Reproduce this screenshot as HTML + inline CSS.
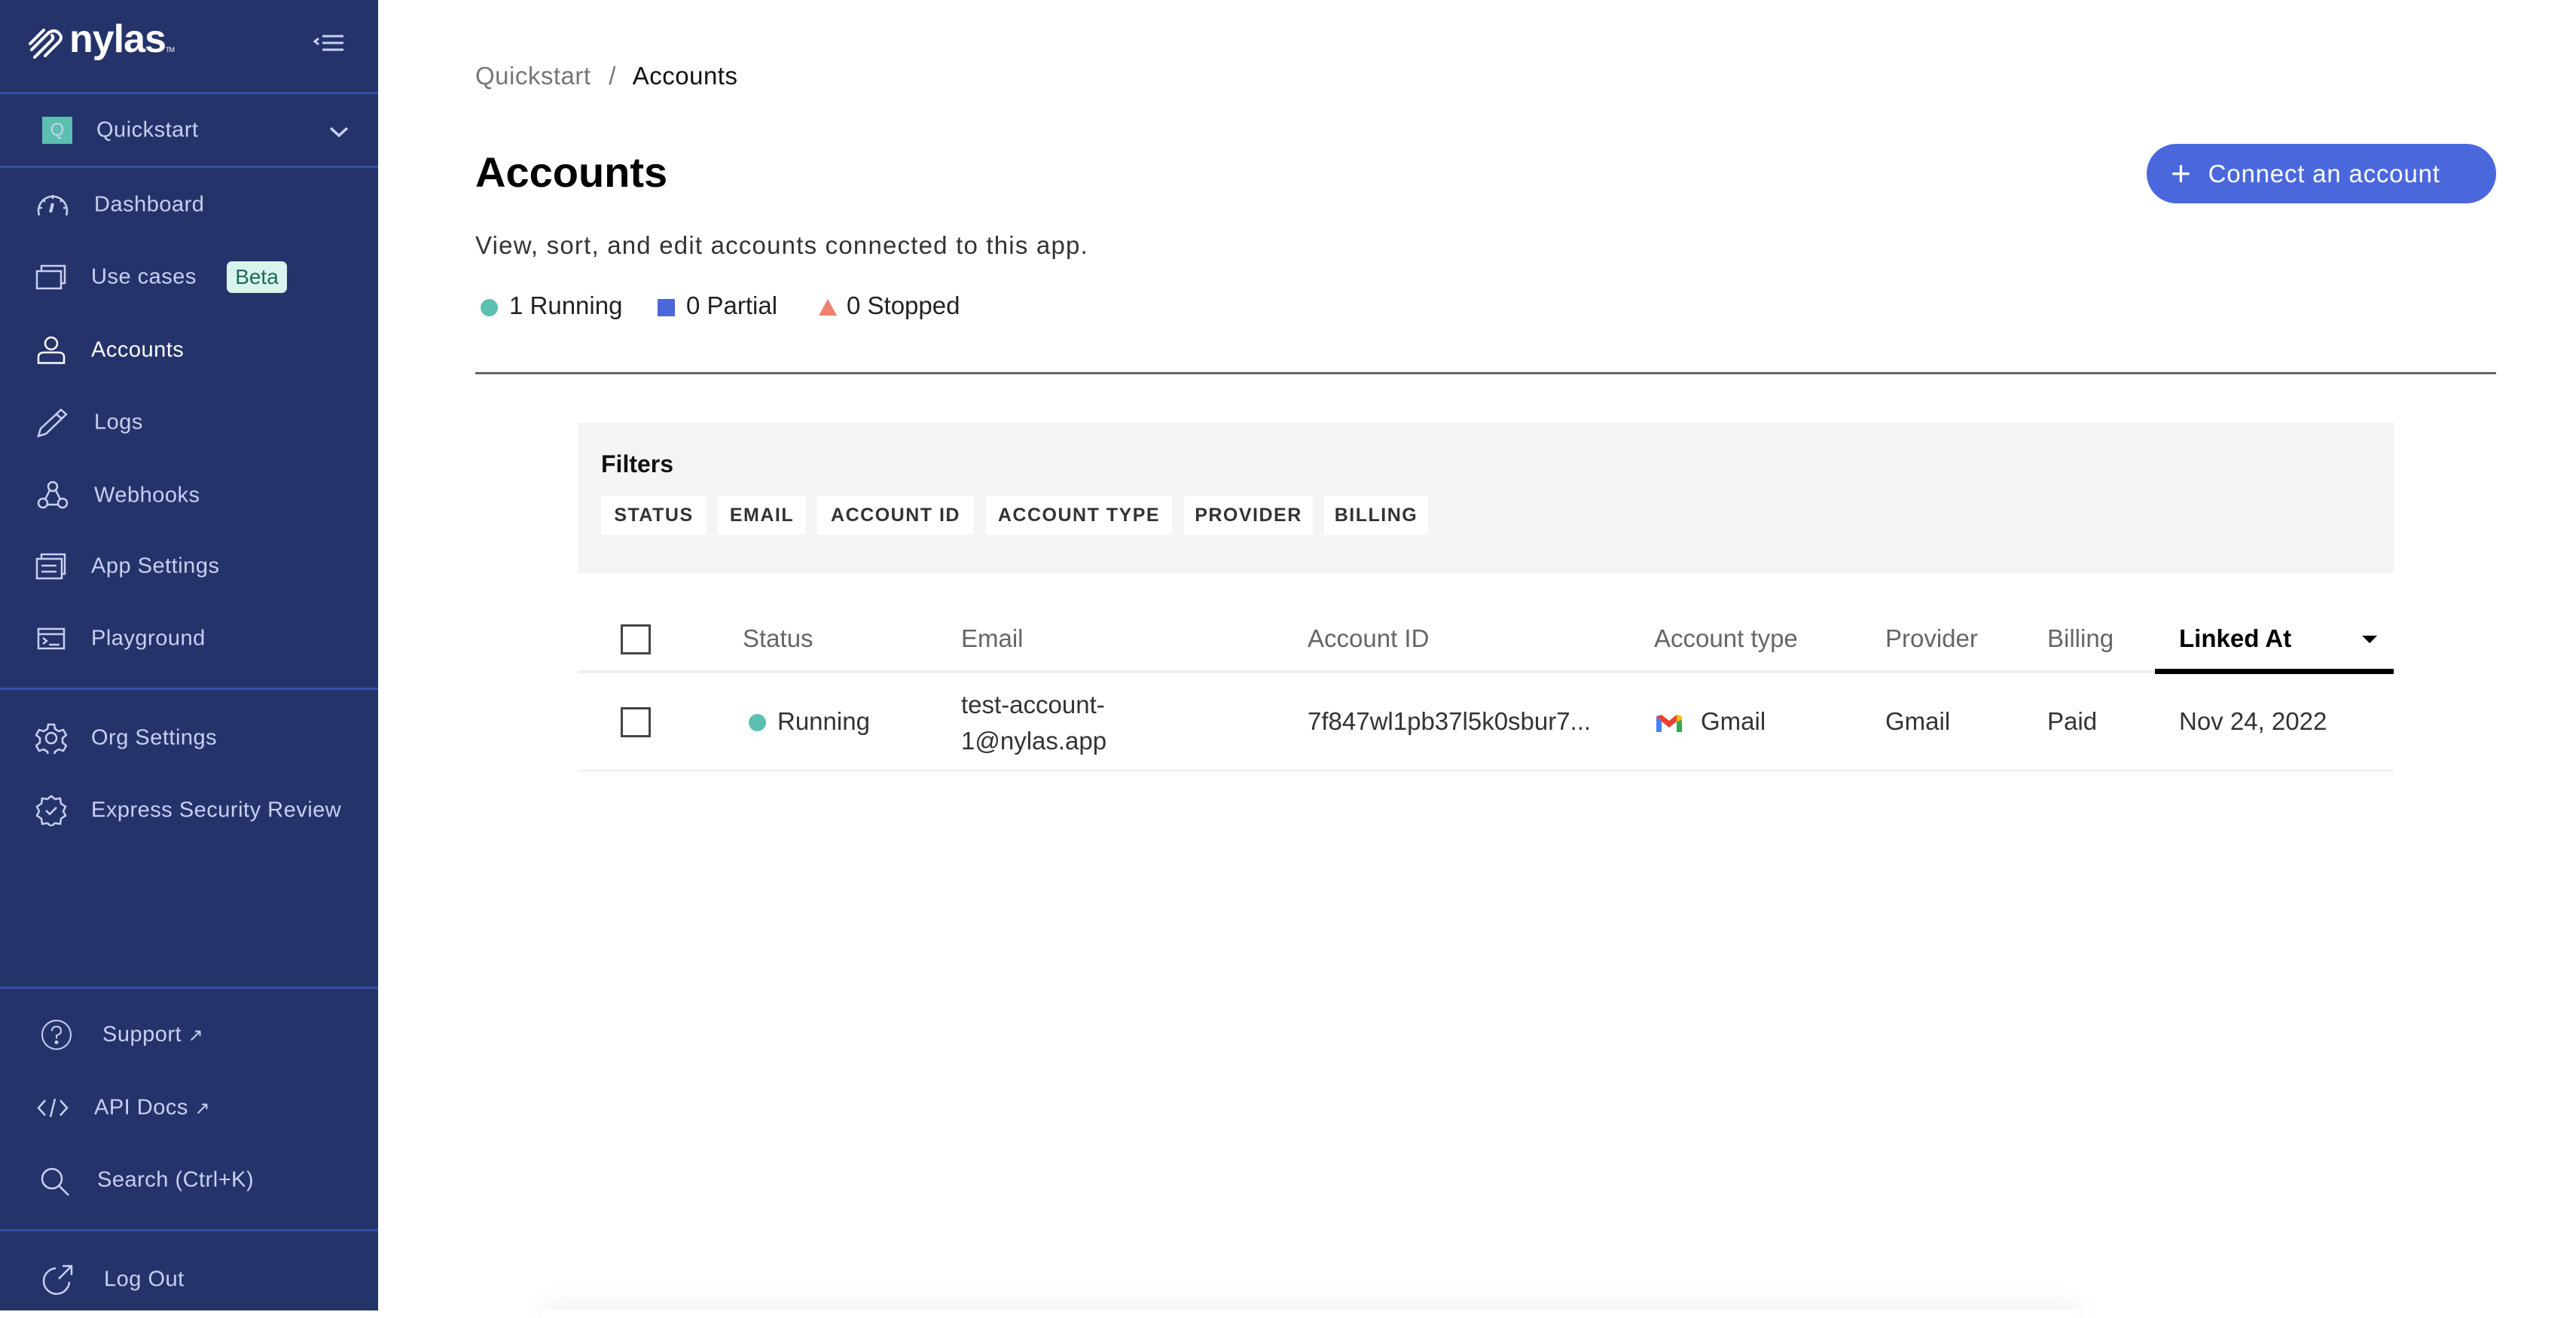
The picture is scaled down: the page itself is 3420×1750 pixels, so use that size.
<!DOCTYPE html>
<html><head><meta charset="utf-8"><style>
*{margin:0;padding:0;box-sizing:border-box}
body{width:3420px;height:1740px;background:#fff;font-family:"Liberation Sans",sans-serif;position:relative;overflow:hidden}
.sb{position:absolute;left:0;top:0;width:502px;height:1740px;background:#25336b}
.hr{position:absolute;left:0;width:502px;height:3px;background:#3550a8}
.it{position:absolute;color:#c8d0f2;font-size:29px;transform:translateY(-50%);white-space:nowrap;letter-spacing:0.5px}
.ic{position:absolute;transform:translateY(-50%)}
.a{position:absolute;white-space:nowrap}
.chip{position:absolute;top:658px;height:52px;background:#fff;font-weight:bold;font-size:25px;letter-spacing:1.5px;color:#333;display:flex;align-items:center;justify-content:center}
.th{position:absolute;top:848px;transform:translateY(-50%);font-size:33px;color:#666;white-space:nowrap}
.td{position:absolute;top:958px;transform:translateY(-50%);font-size:33px;color:#333;white-space:nowrap}
.cb{position:absolute;width:40px;height:40px;border:3px solid #444;background:#fff}
</style></head><body>
<div class="sb">
  <svg class="ic" style="left:38px;top:57px" width="50" height="42" viewBox="0 0 50 42" fill="none" stroke="#fff" stroke-width="4" stroke-linecap="round"><path d="M4 30 L26 8 Q34 2 40 8 Q46 14 40 20 L22 38"/><path d="M2 22 L20 4"/><path d="M12 36 L30 18 Q34 14 31 11"/><path d="M8 40 L22 26"/></svg>
  <div class="a" style="left:92px;top:22px;font-size:52px;font-weight:bold;color:#fff;letter-spacing:-1px">nylas<span style="font-size:9px;font-weight:normal">TM</span></div>
  <svg class="ic" style="left:415px;top:57px" width="42" height="24" viewBox="0 0 42 24" stroke="#c8d0f2" stroke-width="3" fill="none"><path d="M8 6 L3 10 L8 14"/><path d="M13 3H41M13 12H41M13 21H41"/></svg>
  <div class="hr" style="top:122px"></div>
  <div class="ic" style="left:56px;top:173px;width:40px;height:36px;background:#5bc0b0;color:#c8d0f2;font-size:24px;text-align:center;line-height:36px">Q</div>
  <div class="it" style="left:128px;top:173px">Quickstart</div>
  <svg class="ic" style="left:436px;top:175px" width="28" height="16" viewBox="0 0 28 16" stroke="#c8d0f2" stroke-width="3.5" fill="none"><path d="M3 3 L14 13 L25 3"/></svg>
  <div class="hr" style="top:220px"></div>

  <svg class="ic" style="left:48px;top:272px" width="44" height="32" viewBox="0 0 44 32" stroke="#c8d0f2" stroke-width="2.5" fill="none"><path d="M4 30 A19 19 0 1 1 40 30"/><path d="M22 14 L19 26" stroke-width="4"/><path d="M22 3v5M9 9l3 3M35 9l-3 3M3 20h5M36 20h5"/></svg>
  <div class="it" style="left:125px;top:272px">Dashboard</div>

  <svg class="ic" style="left:47px;top:368px" width="42" height="34" viewBox="0 0 42 34" stroke="#c8d0f2" stroke-width="2.5" fill="none"><rect x="2" y="9" width="32" height="23"/><path d="M8 9V2H39V25H34"/></svg>
  <div class="it" style="left:121px;top:368px">Use cases</div>
  <div class="a" style="left:301px;top:347px;width:80px;height:42px;background:#d9f3ee;border-radius:7px;color:#1d6b55;font-size:28px;line-height:42px;text-align:center">Beta</div>

  <svg class="ic" style="left:49px;top:465px" width="38" height="38" viewBox="0 0 38 38" stroke="#fff" stroke-width="2.5" fill="none"><circle cx="19" cy="10" r="8"/><path d="M2 36V28Q2 22 10 22H28Q36 22 36 28V36Z"/></svg>
  <div class="it" style="left:121px;top:465px;color:#fff">Accounts</div>

  <svg class="ic" style="left:49px;top:561px" width="42" height="40" viewBox="0 0 42 40" stroke="#c8d0f2" stroke-width="2.5" fill="none"><path d="M2 38 L5 28 L32 3 L39 9 L12 35 Z M26 9 L33 15"/></svg>
  <div class="it" style="left:125px;top:561px">Logs</div>

  <svg class="ic" style="left:49px;top:658px" width="42" height="40" viewBox="0 0 42 40" stroke="#c8d0f2" stroke-width="2.5" fill="none"><circle cx="21" cy="8" r="6"/><circle cx="8" cy="30" r="6"/><circle cx="34" cy="30" r="6"/><path d="M17 13 L11 25M25 13 L31 25M14 32H28"/></svg>
  <div class="it" style="left:125px;top:658px">Webhooks</div>

  <svg class="ic" style="left:47px;top:752px" width="42" height="36" viewBox="0 0 42 36" stroke="#c8d0f2" stroke-width="2.5" fill="none"><rect x="2" y="8" width="33" height="26"/><path d="M8 8V2H39V28H35M8 17H28M8 25H28"/></svg>
  <div class="it" style="left:121px;top:752px">App Settings</div>

  <svg class="ic" style="left:49px;top:848px" width="38" height="30" viewBox="0 0 38 30" stroke="#c8d0f2" stroke-width="2.5" fill="none"><rect x="2" y="2" width="34" height="26"/><path d="M2 9H36M8 14L13 18L8 22M16 23H30"/></svg>
  <div class="it" style="left:121px;top:848px">Playground</div>

  <div class="hr" style="top:913px"></div>

  <svg class="ic" style="left:47px;top:980px" width="42" height="42" viewBox="0 0 42 42" stroke="#c8d0f2" stroke-width="2.5" fill="none"><circle cx="21" cy="21" r="7"/><path d="M17 3h8l1 6 5 3 6-2 4 7-5 4v6l5 4-4 7-6-2-5 3-1 6h-8l-1-6-5-3-6 2-4-7 5-4v-6l-5-4 4-7 6 2 5-3z"/></svg>
  <div class="it" style="left:121px;top:980px">Org Settings</div>

  <svg class="ic" style="left:47px;top:1076px" width="42" height="42" viewBox="0 0 42 42" stroke="#c8d0f2" stroke-width="2.5" fill="none"><path d="M21 2l5 4 7-1 1 7 6 4-3 6 3 6-6 4-1 7-7-1-5 4-5-4-7 1-1-7-6-4 3-6-3-6 6-4 1-7 7 1z"/><path d="M14 21l5 5 9-9"/></svg>
  <div class="it" style="left:121px;top:1076px">Express Security Review</div>

  <div class="hr" style="top:1310px"></div>

  <svg class="ic" style="left:54px;top:1374px" width="42" height="42" viewBox="0 0 42 42" stroke="#c8d0f2" stroke-width="2" fill="none"><circle cx="21" cy="21" r="19"/><path d="M15 16Q15 10 21 10Q27 10 27 16Q27 20 21 22V26"/><circle cx="21" cy="31" r="1.5" fill="#c8d0f2"/></svg>
  <div class="it" style="left:136px;top:1374px">Support <span style="font-size:24px">&#x2197;&#xFE0E;</span></div>

  <svg class="ic" style="left:48px;top:1471px" width="44" height="30" viewBox="0 0 44 30" stroke="#c8d0f2" stroke-width="2.5" fill="none"><path d="M12 5L3 15L12 25M32 5L41 15L32 25M25 3L19 27"/></svg>
  <div class="it" style="left:125px;top:1471px">API Docs <span style="font-size:24px">&#x2197;&#xFE0E;</span></div>

  <svg class="ic" style="left:53px;top:1569px" width="40" height="40" viewBox="0 0 40 40" stroke="#c8d0f2" stroke-width="2.5" fill="none"><circle cx="16" cy="16" r="13"/><path d="M25 25L38 38"/></svg>
  <div class="it" style="left:129px;top:1567px">Search (Ctrl+K)</div>

  <div class="hr" style="top:1632px"></div>

  <svg class="ic" style="left:56px;top:1699px" width="42" height="42" viewBox="0 0 42 42" stroke="#c8d0f2" stroke-width="2.5" fill="none"><path d="M18 6A17 17 0 1 0 36 24"/><path d="M22 20L39 3M27 3H39V15"/></svg>
  <div class="it" style="left:138px;top:1699px">Log Out</div>
</div>

<div class="a" style="left:631px;top:82px;font-size:33px;color:#777;letter-spacing:0.5px">Quickstart <span style="margin:0 14px">/</span> <span style="color:#111">Accounts</span></div>
<div class="a" style="left:631px;top:196px;font-size:56px;font-weight:bold;color:#000">Accounts</div>
<div class="a" style="left:2850px;top:191px;width:464px;height:79px;border-radius:40px;background:#4a68dc;color:#fff;font-size:33px;line-height:79px;padding-left:32px;letter-spacing:0.8px"><span style="font-size:46px;vertical-align:-4px;margin-right:22px">+</span>Connect an account</div>
<div class="a" style="left:631px;top:307px;font-size:33px;color:#333;letter-spacing:1.2px">View, sort, and edit accounts connected to this app.</div>
<div class="a" style="left:638px;top:397px;width:23px;height:23px;border-radius:50%;background:#5bc0b0"></div>
<div class="a" style="left:676px;top:387px;font-size:33px;color:#222">1 Running</div>
<div class="a" style="left:873px;top:397px;width:23px;height:23px;background:#4a68dc"></div>
<div class="a" style="left:911px;top:387px;font-size:33px;color:#222">0 Partial</div>
<div class="a" style="left:1087px;top:397px;width:0;height:0;border-left:12px solid transparent;border-right:12px solid transparent;border-bottom:22px solid #ef8070"></div>
<div class="a" style="left:1124px;top:387px;font-size:33px;color:#222">0 Stopped</div>
<div class="a" style="left:631px;top:494px;width:2683px;height:3px;background:#666"></div>

<div class="a" style="left:767px;top:561px;width:2411px;height:200px;background:#f4f4f4"></div>
<div class="a" style="left:798px;top:598px;font-size:32px;font-weight:bold;color:#111">Filters</div>
<div class="chip" style="left:798px;width:140px">STATUS</div>
<div class="chip" style="left:953px;width:117px">EMAIL</div>
<div class="chip" style="left:1085px;width:208px">ACCOUNT ID</div>
<div class="chip" style="left:1309px;width:247px">ACCOUNT TYPE</div>
<div class="chip" style="left:1572px;width:171px">PROVIDER</div>
<div class="chip" style="left:1758px;width:138px">BILLING</div>

<div class="cb" style="left:824px;top:829px"></div>
<div class="th" style="left:986px">Status</div>
<div class="th" style="left:1276px">Email</div>
<div class="th" style="left:1736px">Account ID</div>
<div class="th" style="left:2196px">Account type</div>
<div class="th" style="left:2503px">Provider</div>
<div class="th" style="left:2718px">Billing</div>
<div class="th" style="left:2893px;color:#000;font-weight:bold">Linked At</div>
<div class="a" style="left:3136px;top:844px;border-left:10px solid transparent;border-right:10px solid transparent;border-top:10px solid #000"></div>
<div class="a" style="left:767px;top:890px;width:2411px;height:4px;background:#f0f0f0"></div>
<div class="a" style="left:2861px;top:888px;width:317px;height:7px;background:#000"></div>

<div class="cb" style="left:824px;top:939px"></div>
<div class="a" style="left:994px;top:948px;width:23px;height:23px;border-radius:50%;background:#5bc0b0"></div>
<div class="td" style="left:1032px">Running</div>
<div class="a" style="left:1276px;top:912px;font-size:33px;color:#333;line-height:48px">test-account-<br>1@nylas.app</div>
<div class="td" style="left:1736px">7f847wl1pb37l5k0sbur7...</div>
<svg class="a" style="left:2196px;top:946px" width="40" height="28" viewBox="0 0 40 28"><path d="M3 5V26H10V12L20 20L30 12V26H37V5L30 3L20 11L10 3Z" fill="#ea4335"/><path d="M3 5V26H10V12Z" fill="#4285f4"/><path d="M30 12V26H37V5Z" fill="#34a853"/><path d="M30 3L37 5V10L30 12Z" fill="#fbbc04"/></svg>
<div class="td" style="left:2258px">Gmail</div>
<div class="td" style="left:2503px">Gmail</div>
<div class="td" style="left:2718px">Paid</div>
<div class="td" style="left:2893px">Nov 24, 2022</div>
<div class="a" style="left:767px;top:1022px;width:2411px;height:3px;background:#f0f0f0"></div>
<div class="a" style="left:720px;top:1740px;width:2040px;height:10px;box-shadow:0 -6px 30px rgba(0,0,0,0.12)"></div>
</body></html>
